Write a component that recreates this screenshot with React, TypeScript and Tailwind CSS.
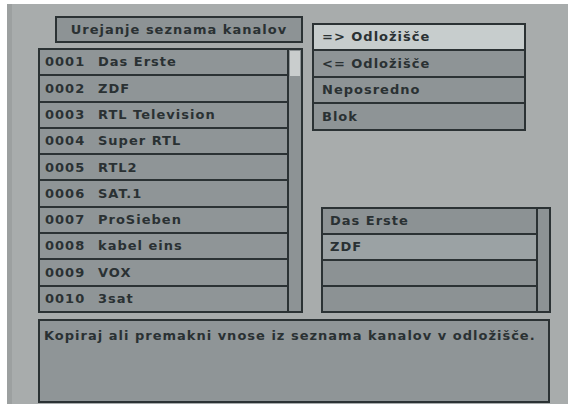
const channels = [
  ['0001', 'Das Erste'],
  ['0002', 'ZDF'],
  ['0003', 'RTL Television'],
  ['0004', 'Super RTL'],
  ['0005', 'RTL2'],
  ['0006', 'SAT.1'],
  ['0007', 'ProSieben'],
  ['0008', 'kabel eins'],
  ['0009', 'VOX'],
  ['0010', '3sat'],
]

const menu = ['=> Odložišče', '<= Odložišče', 'Neposredno', 'Blok']
const clipboard = ['Das Erste', 'ZDF', '', '']

export default function App() {
  return (
    <div
      className="w-[568px] h-[406px] bg-white pt-[4px] pl-[7px] pb-[2px] flex text-[13px] font-bold tracking-[1px] text-[#2a3133] overflow-hidden"
      style={{ fontFamily: '"DejaVu Sans", Verdana, sans-serif' }}
    >
      <div className="flex-1 bg-[#a8acac] border-l-[5px] border-[#9ca0a0] pl-[26px] pt-[12px] flex flex-col">
        <div className="flex h-[297px]">
          {/* channel list column */}
          <div className="w-[265px] flex flex-col">
            <div className="ml-[17px] h-[27px] border-2 border-[#2b3234] bg-[#8d9395] flex items-center justify-center">
              Urejanje seznama kanalov
            </div>
            <div className="mt-[5px] h-[265px] border-2 border-[#2b3234] flex">
              <div className="flex-1 flex flex-col">
                {channels.map(([num, name], i) => (
                  <div
                    key={num}
                    className={`flex-1 flex items-center pl-[5px] bg-[#8f9597] ${i < channels.length - 1 ? 'border-b-2 border-[#2b3234]' : ''}`}
                  >
                    <span className="w-[53px]">{num}</span>
                    <span>{name}</span>
                  </div>
                ))}
              </div>
              <div className="w-[14px] border-l-2 border-[#2b3234] bg-[#8d9395] pt-[1px] px-[1px]">
                <div className="h-[25px] bg-[#c9cdcd]" />
              </div>
            </div>
          </div>

          {/* right column */}
          <div className="ml-[9px] pt-[7px] flex flex-col">
            <div className="w-[214px] h-[108px] border-2 border-[#2b3234] flex flex-col">
              {menu.map((m, i) => (
                <div
                  key={m}
                  className={`flex-1 flex items-center pl-[8px] ${i === 0 ? 'bg-[#c7cdcd]' : 'bg-[#8e9496]'} ${i < menu.length - 1 ? 'border-b-2 border-[#2b3234]' : ''}`}
                >
                  {m}
                </div>
              ))}
            </div>
            <div className="ml-[9px] mt-[76px] w-[230px] h-[107px] border-2 border-[#2b3234] flex">
              <div className="flex-1 flex flex-col">
                {clipboard.map((c, i) => (
                  <div
                    key={i}
                    className={`flex-1 flex items-center pl-[7px] ${i === 1 ? 'bg-[#9ba2a4]' : 'bg-[#8c9294]'} ${i < clipboard.length - 1 ? 'border-b-2 border-[#2b3234]' : ''}`}
                  >
                    {c}
                  </div>
                ))}
              </div>
              <div className="w-[13px] border-l-2 border-[#2b3234] bg-[#8d9395]" />
            </div>
          </div>
        </div>

        {/* description */}
        <div className="mt-[6px] w-[512px] h-[84px] border-2 border-[#2b3234] bg-[#8f9597] pl-[4px] pt-[5px]">
          Kopiraj ali premakni vnose iz seznama kanalov v odložišče.
        </div>
      </div>
    </div>
  )
}
